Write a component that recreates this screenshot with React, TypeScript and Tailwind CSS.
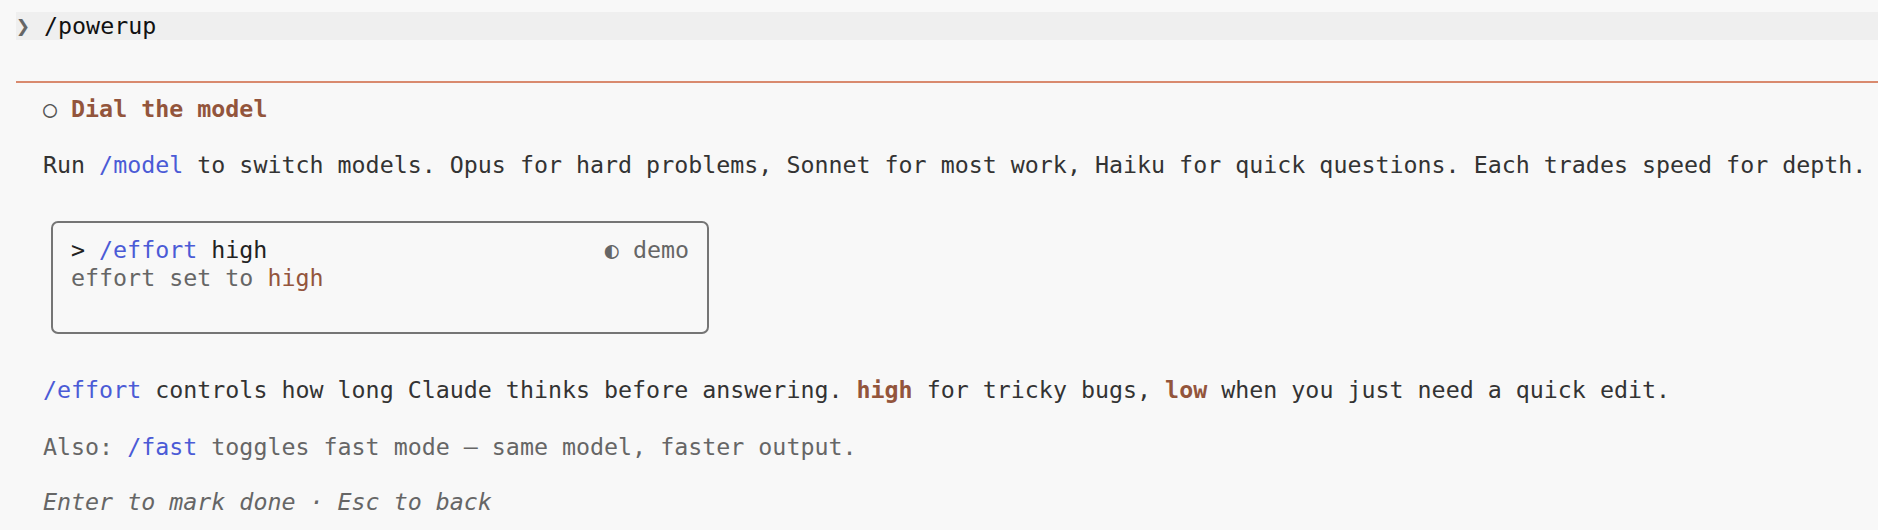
const cmd = 'text-[#4b5bd6]'
const warm = 'text-[#93553c]'

function DemoBox() {
  return (
    <div className="ml-[8px] mt-[42px] w-[658px] h-[113px] rounded-[7px] border-2 border-[#757575] px-[18px] pt-[13px]">
      <div className="flex justify-between">
        <p>
          <span className="text-[#222]">&gt; </span>
          <span className={cmd}>/effort</span>
          <span className="text-[#222]"> high</span>
        </p>
        <p className="text-[#666]">◐ demo</p>
      </div>
      <p className="text-[#666]">
        effort set to <span className={warm}>high</span>
      </p>
    </div>
  )
}

export default function App() {
  return (
    <div className="min-h-screen bg-[#f8f8f8] pt-[12px] font-['DejaVu_Sans_Mono',monospace] text-[23.3px] leading-[28px] text-[#333]">
      <div className="ml-[16px] flex h-[28px] bg-[#efefef]">
        <span className="text-[#666]">❯</span>
        <span className="ml-[14px] text-[#111]">/powerup</span>
      </div>

      <div className="ml-[16px] mt-[41px] h-[2px] bg-[#d98a6e]" />

      <div className="pl-[43px]">
        <p className="mt-[12px]">
          <span className="text-[#555]">○ </span>
          <span className={`font-bold ${warm}`}>Dial the model</span>
        </p>

        <p className="mt-[28px]">
          Run <span className={cmd}>/model</span> to switch models. Opus for hard problems, Sonnet for most work,
          Haiku for quick questions. Each trades speed for depth.
        </p>

        <DemoBox />

        <p className="mt-[42px]">
          <span className={cmd}>/effort</span> controls how long Claude thinks before answering.{' '}
          <span className={`font-bold ${warm}`}>high</span> for tricky bugs,{' '}
          <span className={`font-bold ${warm}`}>low</span> when you just need a quick edit.
        </p>

        <p className="mt-[29px] text-[#666]">
          Also: <span className={cmd}>/fast</span> toggles fast mode — same model, faster output.
        </p>

        <p className="mt-[27px] italic text-[#666]">Enter to mark done · Esc to back</p>
      </div>
    </div>
  )
}
